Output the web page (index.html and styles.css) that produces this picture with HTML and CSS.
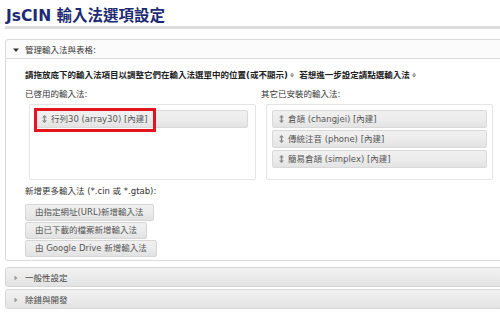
FILE: index.html
```html
<!DOCTYPE html>
<html lang="zh-Hant">
<head>
  <meta charset="UTF-8" />
  <title>JsCIN 輸入法選項設定</title>
  <link rel="stylesheet" href="styles.css">
</head>
<body>
  <div class="page">
    <h1 class="title">JsCIN 輸入法選項設定</h1>

    <div class="accordion">
      <h3 class="acc-head active">
        <svg class="tri" width="6" height="6" viewBox="0 0 6 6"><path d="M0 1.5h6L3 5z" fill="#333"/></svg>
        管理輸入法與表格:
      </h3>
      <div class="acc-panel">
        <p class="hint">請拖放底下的輸入法項目以調整它們在輸入法選單中的位置(或不顯示)。 若想進一步設定請點選輸入法。</p>

        <div class="columns">
          <div class="col">
            <p class="label">已啓用的輸入法:</p>
            <ul class="im-list left">
              <li class="im-item marked">
                <svg class="grip" width="5" height="8" viewBox="0 0 5 8"><path d="M2.5 0L5 2.5H3.2v3H5L2.5 8 0 5.5h1.8v-3H0z" fill="#888"/></svg>
                行列30 (array30) [內建]
                <span class="mark"></span>
              </li>
            </ul>
          </div>
          <div class="col">
            <p class="label">其它已安裝的輸入法:</p>
            <ul class="im-list right">
              <li class="im-item">
                <svg class="grip" width="5" height="8" viewBox="0 0 5 8"><path d="M2.5 0L5 2.5H3.2v3H5L2.5 8 0 5.5h1.8v-3H0z" fill="#888"/></svg>
                倉頡 (changjei) [內建]
              </li>
              <li class="im-item">
                <svg class="grip" width="5" height="8" viewBox="0 0 5 8"><path d="M2.5 0L5 2.5H3.2v3H5L2.5 8 0 5.5h1.8v-3H0z" fill="#888"/></svg>
                傳統注音 (phone) [內建]
              </li>
              <li class="im-item">
                <svg class="grip" width="5" height="8" viewBox="0 0 5 8"><path d="M2.5 0L5 2.5H3.2v3H5L2.5 8 0 5.5h1.8v-3H0z" fill="#888"/></svg>
                簡易倉頡 (simplex) [內建]
              </li>
            </ul>
          </div>
        </div>

        <p class="label add-label">新增更多輸入法 (*.cin 或 *.gtab):</p>
        <div class="add-buttons">
          <button class="add-button">由指定網址(URL)新增輸入法</button>
          <button class="add-button">由已下載的檔案新增輸入法</button>
          <button class="add-button">由 Google Drive 新增輸入法</button>
        </div>
      </div>

      <h3 class="acc-head closed first-closed">
        <svg class="tri" width="6" height="6" viewBox="0 0 6 6"><path d="M1.5 0.5v5L4.5 3z" fill="#999"/></svg>
        一般性設定
      </h3>
      <h3 class="acc-head closed">
        <svg class="tri" width="6" height="6" viewBox="0 0 6 6"><path d="M1.5 0.5v5L4.5 3z" fill="#999"/></svg>
        除錯與開發
      </h3>
    </div>
  </div>
</body>
</html>
```

FILE: styles.css
```css
html, body {
  overflow: hidden;
}
body {
  margin: 0;
  padding: 0;
  font-family: "DejaVu Sans", "Noto Sans CJK TC", sans-serif;
  font-size: 8.5px;
  color: #222;
  background: #fff;
}
.page {
  width: 520px;
}
.title {
  margin: 0 0 0 5px;
  padding: 6px 0 0 1px;
  font-size: 15.5px;
  line-height: 20px;
  font-weight: bold;
  color: #1d2b73;
  border-bottom: 3px solid #dcdcdc;
}
.accordion {
  margin: 10px 0 0 5px;
}
.acc-head {
  margin: 0;
  height: 20px;
  box-sizing: border-box;
  padding: 4px 0 0 19px;
  font-size: 8.5px;
  line-height: 12px;
  font-weight: normal;
  color: #333;
  border: 1px solid #d6d6d6;
  border-radius: 3px;
  position: relative;
  background: linear-gradient(#f1f1f1, #ebebeb 50%, #e3e3e3);
}
.acc-head .tri {
  position: absolute;
  left: 7px;
  top: 7px;
}
.acc-head.active {
  background: #fbfbfb;
  border-color: #dadada;
  border-radius: 3px 3px 0 0;
  color: #333;
}
.acc-head.closed {
  color: #444;
  margin-top: 2px;
}
.acc-head.first-closed {
  margin-top: 6px;
}
.acc-panel {
  border: 1px solid #dadada;
  border-top: 0;
  border-radius: 0 0 3px 3px;
  padding: 10px 0 3px 19px;
}
.hint {
  margin: 0 0 7px;
  line-height: 12px;
  font-weight: bold;
  color: #222;
}
.label {
  margin: 0 0 4px;
  line-height: 12px;
  color: #333;
}
.columns {
  display: grid;
  grid-template-columns: 236px 236px;
}
.im-list {
  list-style: none;
  margin: 0 0 5px 4px;
  padding: 5px;
  width: 227px;
  height: 76px;
  box-sizing: border-box;
  border: 1px solid #e4e4e4;
  border-radius: 2px;
}
.im-list.right {
  margin-left: 5px;
}
.im-list.left {
  padding-right: 7px;
}
.im-item {
  position: relative;
  height: 18px;
  box-sizing: border-box;
  margin-bottom: 2px;
  padding: 0 0 0 6px;
  line-height: 16px;
  color: #555;
  border: 1px solid #d9d9d9;
  border-radius: 2px;
  background: linear-gradient(#f0f0f0, #ececec 50%, #e3e3e3);
  display: flex;
  align-items: center;
  gap: 4px;
}
.grip {
  flex: none;
}
.mark {
  position: absolute;
  left: -2px;
  top: -3px;
  width: 122px;
  height: 24px;
  box-sizing: border-box;
  border: 3px solid #e3151e;
}
.add-label {
  margin-bottom: 7px;
}
.add-buttons {
  display: flex;
  flex-direction: column;
  align-items: flex-start;
  gap: 1px;
}
.add-button {
  height: 17px;
  margin: 0;
  padding: 0 9px;
  font-family: inherit;
  font-size: 8.5px;
  line-height: 15px;
  color: #555;
  border: 1px solid #d6d6d6;
  border-radius: 2px;
  background: linear-gradient(#f0f0f0, #ebebeb 50%, #e2e2e2);
}
```
